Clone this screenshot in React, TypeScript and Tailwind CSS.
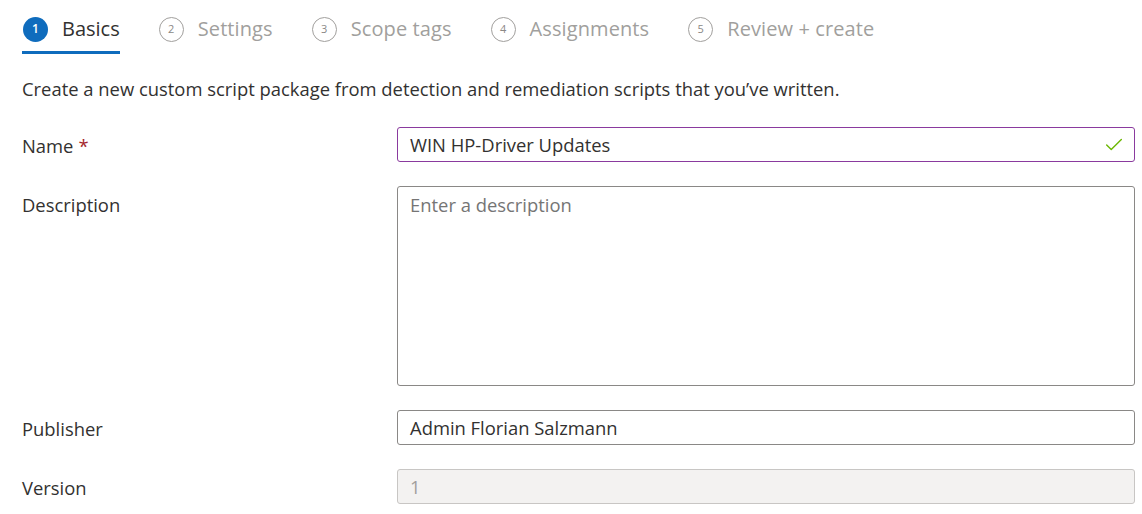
import { Check } from "lucide-react";

const steps = [
  { n: 2, label: "Settings" },
  { n: 3, label: "Scope tags" },
  { n: 4, label: "Assignments" },
  { n: 5, label: "Review + create" },
];

const font = { fontFamily: '"Open Sans", "Noto Sans", sans-serif' };

function Row({
  label,
  required,
  children,
}: {
  label: string;
  required?: boolean;
  children: React.ReactNode;
}) {
  return (
    <div className="flex items-start">
      <div className="w-[375px] shrink-0 pt-[6px] text-[18.4px] leading-[26px] text-[#323130]">
        {label}
        {required && <span className="ml-[5px] text-[#a4262c]">*</span>}
      </div>
      <div className="flex-1">{children}</div>
    </div>
  );
}

export default function App() {
  return (
    <div
      className="h-[514px] w-[1142px] overflow-hidden bg-white pl-[22px] pr-[7px]"
      style={font}
    >
      {/* wizard tabs */}
      <div className="flex items-start gap-[39px] pt-[16px]">
        <div className="flex flex-col">
          <div className="flex items-center gap-[14px] pl-[1px]">
            <span className="flex h-[25px] w-[25px] items-center justify-center rounded-full bg-[#0f6cbd] text-[12px] font-semibold text-white">
              1
            </span>
            <span className="text-[20px] leading-[26px] text-[#323130]">Basics</span>
          </div>
          <div className="mt-[9px] h-[3px] w-full bg-[#0f6cbd]" />
        </div>
        {steps.map((s) => (
          <div key={s.n} className="flex items-center gap-[14px]">
            <span className="flex h-[25px] w-[25px] items-center justify-center rounded-full border border-[#a19f9d] text-[11px] text-[#8a8886]">
              {s.n}
            </span>
            <span className="text-[20px] leading-[26px] tracking-[0.1px] text-[#a19f9d]">{s.label}</span>
          </div>
        ))}
      </div>

      <p className="mt-[22px] text-[18.4px] leading-[26px] text-[#323130]">
        Create a new custom script package from detection and remediation scripts that you’ve written.
      </p>

      <div className="mt-[25px] flex flex-col gap-[24px]">
        <Row label="Name" required>
          <div className="flex h-[35px] items-center rounded-[3px] border border-[#8a3a9e] px-[12px] text-[18.4px] text-[#323130]">
            <span className="flex-1">WIN HP-Driver Updates</span>
            <Check size={22} strokeWidth={1.5} className="mr-[-3px] text-[#6bb700]" />
          </div>
        </Row>
        <Row label="Description">
          <div className="h-[200px] rounded-[3px] border border-[#8a8886] px-[12px] pt-[4px] text-[18.4px] text-[#757575]">
            Enter a description
          </div>
        </Row>
        <Row label="Publisher">
          <div className="flex h-[35px] items-center rounded-[3px] border border-[#8a8886] px-[12px] text-[18.4px] text-[#323130]">
            Admin Florian Salzmann
          </div>
        </Row>
        <Row label="Version">
          <div className="flex h-[35px] items-center rounded-[3px] border border-[#c8c6c4] bg-[#f3f2f1] px-[12px] text-[18.4px] text-[#a19f9d]">
            1
          </div>
        </Row>
      </div>
    </div>
  );
}
